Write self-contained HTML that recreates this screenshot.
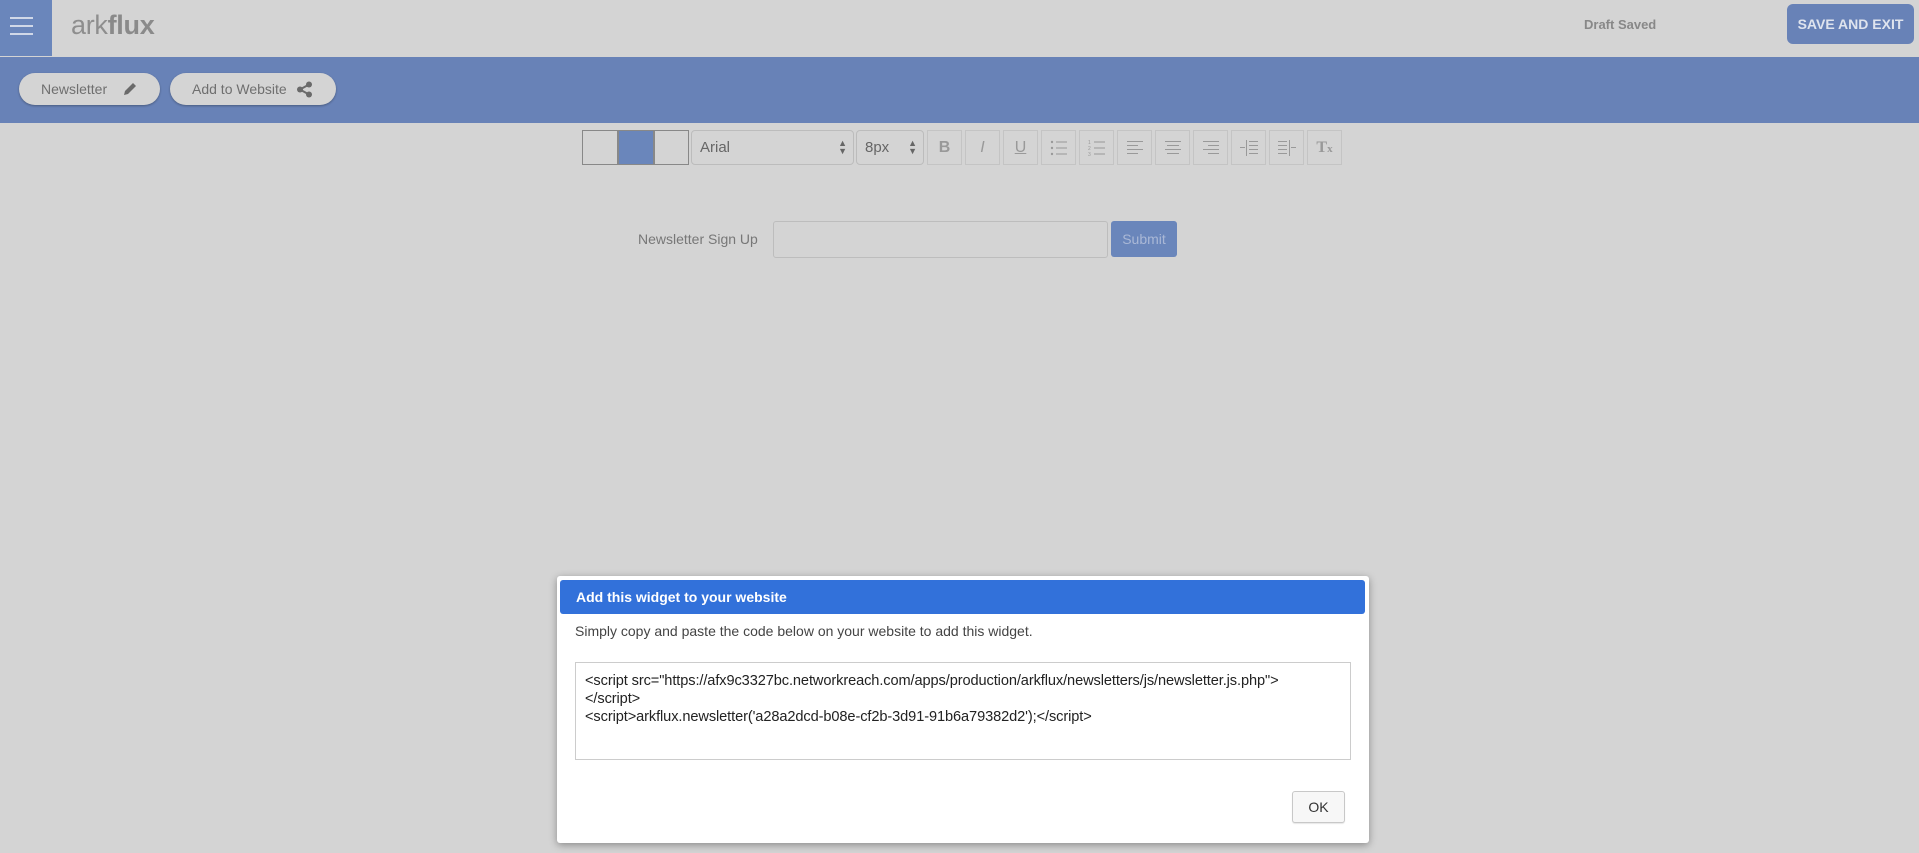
<!DOCTYPE html>
<html><head><meta charset="utf-8"><style>
*{box-sizing:border-box;margin:0;padding:0}
body{width:1919px;height:853px;background:#d4d4d4;font-family:"Liberation Sans",sans-serif;position:relative;overflow:hidden;color:#777}
.a{position:absolute}
.hb{left:0;top:0;width:52px;height:56px;background:#6a86bb}
.hb i{position:absolute;left:10px;width:23px;height:2px;background:#d0d8e8}
.band{left:0;top:57px;width:1919px;height:66px;background:#6882b7}
.pill{top:73px;height:32px;border-radius:16px;background:#d4d4d4;box-shadow:0 1px 2px rgba(0,0,0,.3);font-size:14px;color:#6f6f6f;line-height:32px;padding-left:22px}
.tb{top:130px;height:35px;border:1px solid #bcbcbc;background:#d4d4d4}
.btn{top:130px;width:35px;height:35px;border:1px solid #c4c4c4;background:#d4d4d4;color:#999;text-align:center;line-height:33px;font-size:16px}
.btn svg{position:absolute;left:8px;top:9px}
</style></head><body>
<div class="a hb"><i style="top:17px"></i><i style="top:25px"></i><i style="top:33px"></i></div>
<div class="a" style="left:71px;top:10px;font-size:27px;color:#8e8e8e;letter-spacing:-0.3px;font-weight:300">ark<b style="font-weight:bold;color:#8a8a8a">flux</b></div>
<div class="a" style="left:1584px;top:17px;font-size:13px;font-weight:bold;color:#888">Draft Saved</div>
<div class="a" style="left:1787px;top:4px;width:127px;height:40px;background:#6882b7;border-radius:6px;color:#dfe4ee;font-weight:bold;font-size:14px;text-align:center;line-height:40px">SAVE AND EXIT</div>
<div class="a band"></div>
<div class="a pill" style="left:19px;width:141px">Newsletter
<svg class="a" style="left:103px;top:8px" width="16" height="16" viewBox="0 0 16 16"><path d="M2 14l1-4 8-8 3 3-8 8z" fill="#6a6a6a"/></svg></div>
<div class="a pill" style="left:170px;width:166px">Add to Website
<svg class="a" style="left:126px;top:8px" width="17" height="17" viewBox="0 0 17 17"><circle cx="13" cy="3.5" r="3" fill="#6a6a6a"/><circle cx="4" cy="8.5" r="3" fill="#6a6a6a"/><circle cx="13" cy="13.5" r="3" fill="#6a6a6a"/><path d="M13 3.5L4 8.5 13 13.5" stroke="#6a6a6a" stroke-width="2" fill="none"/></svg></div>

<div class="a tb" style="left:582px;width:36px;border-color:#888"></div>
<div class="a tb" style="left:618px;width:36px;background:#6a86bb;border-color:#888"></div>
<div class="a tb" style="left:654px;width:35px;border-color:#888"></div>
<div class="a tb" style="left:691px;width:163px;border-radius:4px;font-size:15px;color:#666;padding:8px 8px">Arial<span class="a" style="right:6px;top:8px;font-size:9px;line-height:8px">▲<br>▼</span></div>
<div class="a tb" style="left:856px;width:68px;border-radius:4px;font-size:15px;color:#666;padding:8px 8px">8px<span class="a" style="right:6px;top:8px;font-size:9px;line-height:8px">▲<br>▼</span></div>
<div class="a btn" style="left:927px;font-weight:bold">B</div>
<div class="a btn" style="left:965px;font-style:italic">I</div>
<div class="a btn" style="left:1003px;text-decoration:underline">U</div>
<div class="a btn" style="left:1041px"><svg width="18" height="16"><g fill="#999"><circle cx="2" cy="2" r="1.2"/><circle cx="2" cy="8" r="1.2"/><circle cx="2" cy="14" r="1.2"/><rect x="6" y="1.5" width="11" height="1"/><rect x="6" y="7.5" width="11" height="1"/><rect x="6" y="13.5" width="11" height="1"/></g></svg></div>
<div class="a btn" style="left:1079px"><svg width="18" height="16"><g fill="#999" font-size="5"><text x="0" y="4">1</text><text x="0" y="10">2</text><text x="0" y="16">3</text><rect x="6" y="1.5" width="11" height="1"/><rect x="6" y="7.5" width="11" height="1"/><rect x="6" y="13.5" width="11" height="1"/></g></svg></div>
<div class="a btn" style="left:1117px"><svg width="18" height="16"><g fill="#999"><rect x="1" y="1" width="16" height="1"/><rect x="1" y="5" width="11" height="1"/><rect x="1" y="9" width="16" height="1"/><rect x="1" y="13" width="11" height="1"/></g></svg></div>
<div class="a btn" style="left:1155px"><svg width="18" height="16"><g fill="#999"><rect x="1" y="1" width="16" height="1"/><rect x="3" y="5" width="12" height="1"/><rect x="1" y="9" width="16" height="1"/><rect x="3" y="13" width="12" height="1"/></g></svg></div>
<div class="a btn" style="left:1193px"><svg width="18" height="16"><g fill="#999"><rect x="1" y="1" width="16" height="1"/><rect x="6" y="5" width="11" height="1"/><rect x="1" y="9" width="16" height="1"/><rect x="6" y="13" width="11" height="1"/></g></svg></div>
<div class="a btn" style="left:1231px"><svg width="20" height="16"><g fill="#999"><rect x="0" y="7" width="5" height="1"/><rect x="6" y="0" width="1" height="16"/><rect x="9" y="1" width="9" height="1"/><rect x="9" y="5" width="9" height="1"/><rect x="9" y="9" width="9" height="1"/><rect x="9" y="13" width="9" height="1"/></g></svg></div>
<div class="a btn" style="left:1269px"><svg width="20" height="16"><g fill="#999"><rect x="0" y="1" width="9" height="1"/><rect x="0" y="5" width="9" height="1"/><rect x="0" y="9" width="9" height="1"/><rect x="0" y="13" width="9" height="1"/><rect x="11" y="0" width="1" height="16"/><rect x="13" y="7" width="5" height="1"/></g></svg></div>
<div class="a btn" style="left:1307px;font-family:'Liberation Serif',serif;font-weight:bold;color:#999">T<span style="font-size:11px">x</span></div>

<div class="a" style="left:638px;top:231px;font-size:14px;color:#777">Newsletter Sign Up</div>
<div class="a" style="left:773px;top:221px;width:335px;height:37px;border:1px solid #bdbdbd;border-radius:3px"></div>
<div class="a" style="left:1111px;top:221px;width:66px;height:36px;background:#6a86bb;border-radius:3px;color:#aab8d6;font-size:14px;text-align:center;line-height:36px">Submit</div>

<div class="a" style="left:557px;top:576px;width:812px;height:267px;background:#fff;border-radius:3px;box-shadow:0 2px 8px rgba(0,0,0,.35)">
<div class="a" style="left:3px;top:4px;width:805px;height:34px;background:#3271da;border-radius:3px;color:#fff;font-weight:bold;font-size:14px;line-height:34px;padding-left:16px">Add this widget to your website</div>
<div class="a" style="left:18px;top:47px;font-size:14px;color:#444">Simply copy and paste the code below on your website to add this widget.</div>
<div class="a" style="left:18px;top:86px;width:776px;height:98px;border:1px solid #ccc;padding:9px 9px;font-size:14.6px;line-height:18px;color:#222;letter-spacing:-0.1px">&lt;script src="https://afx9c3327bc.networkreach.com/apps/production/arkflux/newsletters/js/newsletter.js.php"&gt;<br>&lt;/script&gt;<br>&lt;script&gt;arkflux.newsletter('a28a2dcd-b08e-cf2b-3d91-91b6a79382d2');&lt;/script&gt;</div>
<div class="a" style="left:735px;top:215px;width:53px;height:32px;border:1px solid #c8c8c8;border-radius:3px;background:#f7f7f7;font-size:14px;color:#333;text-align:center;line-height:30px;box-shadow:0 1px 1px rgba(0,0,0,.1)">OK</div>
</div>
</body></html>
